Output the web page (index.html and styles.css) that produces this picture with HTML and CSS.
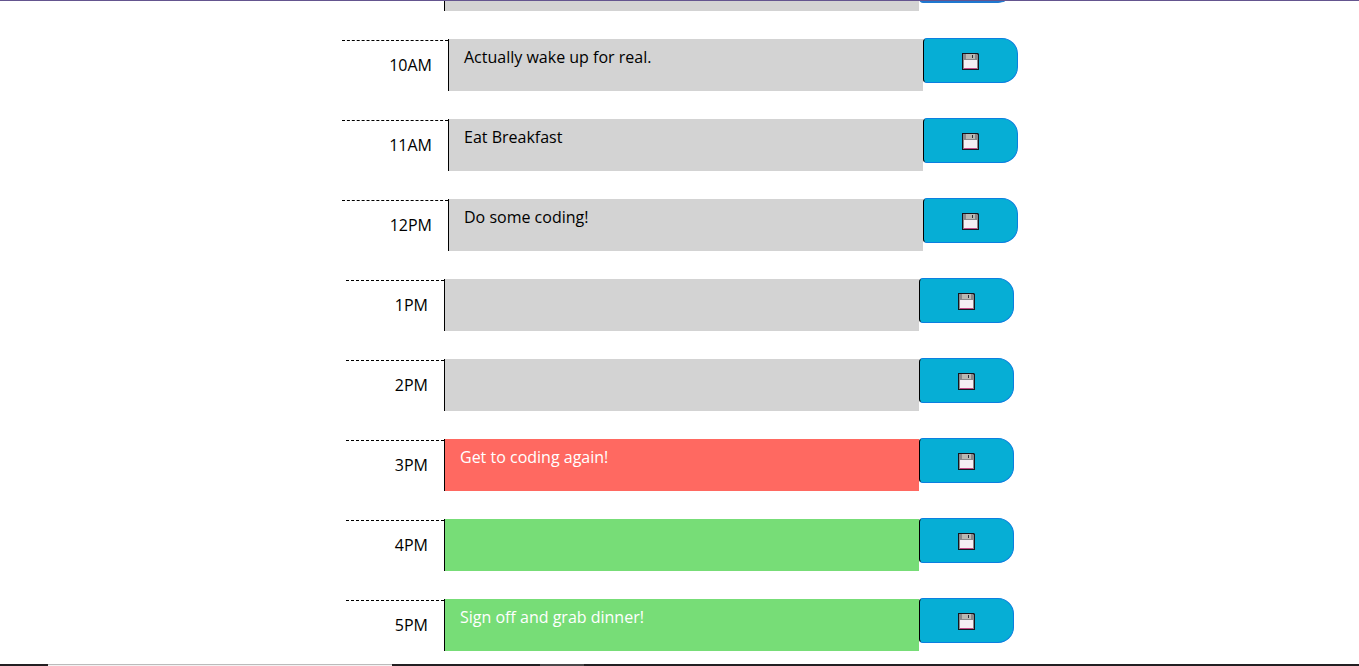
FILE: index.html
```
<!DOCTYPE html>
<html lang="en">
<head>
<meta charset="utf-8">
<title>Work Day Scheduler</title>
<link rel="stylesheet" href="styles.css">
</head>
<body>
<svg class="sprite" aria-hidden="true">
  <symbol id="floppy" viewBox="0 0 17 17">
    <path d="M0 0H16L17 1V17H0Z" fill="#15151d"/>
    <path d="M1 1H15L16 2V16H1Z" fill="#88888b"/>
    <path d="M4 1H13V6H4Z" fill="#b9b8b3"/>
    <path d="M10 2H11V5H10Z" fill="#303038"/>
    <path d="M2 7H15V15H2Z" fill="#f4eff3"/>
    <path d="M2 15H15V16H2Z" fill="#c54b88"/>
  </symbol>
</svg>
<main class="schedule">
  <form class="row"><span class="hour"></span><textarea class="entry past" aria-label="9AM"></textarea><button class="save pressed" type="button" aria-label="Save 9AM"><svg class="icon"><use href="#floppy"/></svg></button></form>
  <form class="row"><label class="hour wide" for="h10">10AM</label><textarea class="entry past" id="h10">Actually wake up for real.</textarea><button class="save" type="button" aria-label="Save 10AM"><svg class="icon"><use href="#floppy"/></svg></button></form>
  <form class="row"><label class="hour wide" for="h11">11AM</label><textarea class="entry past" id="h11">Eat Breakfast</textarea><button class="save" type="button" aria-label="Save 11AM"><svg class="icon"><use href="#floppy"/></svg></button></form>
  <form class="row"><label class="hour wide" for="h12">12PM</label><textarea class="entry past" id="h12">Do some coding!</textarea><button class="save" type="button" aria-label="Save 12PM"><svg class="icon"><use href="#floppy"/></svg></button></form>
  <form class="row"><label class="hour" for="h13">1PM</label><textarea class="entry past" id="h13"></textarea><button class="save" type="button" aria-label="Save 1PM"><svg class="icon"><use href="#floppy"/></svg></button></form>
  <form class="row"><label class="hour" for="h14">2PM</label><textarea class="entry past" id="h14"></textarea><button class="save" type="button" aria-label="Save 2PM"><svg class="icon"><use href="#floppy"/></svg></button></form>
  <form class="row"><label class="hour" for="h15">3PM</label><textarea class="entry present" id="h15">Get to coding again!</textarea><button class="save" type="button" aria-label="Save 3PM"><svg class="icon"><use href="#floppy"/></svg></button></form>
  <form class="row"><label class="hour" for="h16">4PM</label><textarea class="entry future" id="h16"></textarea><button class="save" type="button" aria-label="Save 4PM"><svg class="icon"><use href="#floppy"/></svg></button></form>
  <form class="row"><label class="hour" for="h17">5PM</label><textarea class="entry future" id="h17">Sign off and grab dinner!</textarea><button class="save" type="button" aria-label="Save 5PM"><svg class="icon"><use href="#floppy"/></svg></button></form>
</main>
<div class="taskbar"><span class="search"></span><span class="task"></span></div>
</body>
</html>
```
FILE: styles.css
```
* { box-sizing: border-box; }

body {
  margin: 0;
  height: 100vh;
  display: flex;
  flex-direction: column;
  background: #fff;
  border-top: 1px solid #64558f;
  color: #000;
  font: 16px/24px "Open Sans", sans-serif;
}

.sprite { display: none; }

.schedule {
  flex: 1;
  min-height: 0;
  overflow: hidden;
  display: flex;
  flex-direction: column;
  justify-content: flex-end;
  gap: 27px;
  padding: 0 0 13px 1px;
}

.row {
  flex: none;
  display: flex;
  justify-content: center;
  align-items: flex-start;
}

.hour {
  width: 98px;
  margin-top: 2px;
  padding: 12px 16px 0 0;
  border-top: 1px dashed #000;
  text-align: right;
}

.hour.wide { width: 106px; }

.entry {
  width: 475px;
  height: 52px;
  margin: 1px 0 0;
  padding: 6px 15px;
  border: 0;
  border-left: 1px solid #000;
  border-radius: 0;
  outline: 0;
  resize: none;
  overflow: hidden;
  font: inherit;
  color: #fff;
}

.past { background: #d3d3d3; color: #000; }
.present { background: #ff6961; }
.future { background: #77dd77; }

.save {
  width: 95px;
  height: 45px;
  padding: 0;
  display: flex;
  align-items: center;
  justify-content: center;
  background: #06aed5;
  border: 1px solid #0b7fe0;
  border-left-color: #000;
  border-radius: 4px 16px 16px 4px;
}

.save.pressed {
  background: #1f78d0;
  border-color: #1f78d0;
}

.icon { width: 17px; height: 17px; margin-top: 2px; }

.taskbar {
  flex: none;
  display: flex;
  height: 2px;
  background: #231f22;
}

.search {
  width: 344px;
  margin: 0 148px 0 48px;
  background: #f2f2f2;
  border-top: 1px solid #bbb;
}

.task {
  width: 44px;
  background: #4b484a;
}
```
